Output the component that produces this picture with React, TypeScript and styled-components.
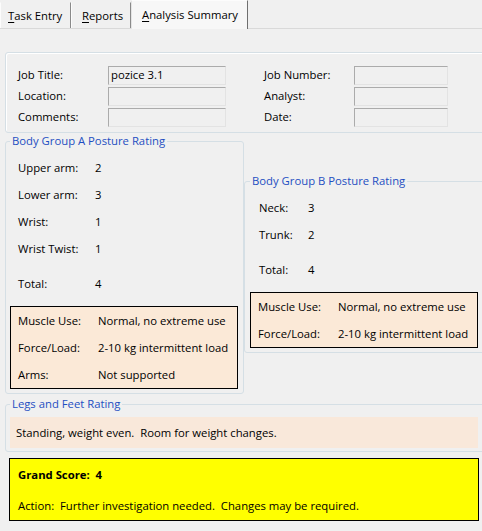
import styled, { createGlobalStyle } from "styled-components";

const GlobalStyle = createGlobalStyle`
    html, body {
        margin: 0;
        padding: 0;
        background: #f0f0f0;
    }
    body {
        font-family: "Open Sans", "Noto Sans", sans-serif;
        font-size: 11.3px;
        color: #000;
    }
`;

const Page = styled.div`
    width: 482px;
    height: 531px;
    overflow: hidden;
    background: #f0f0f0;
`;

const TabStrip = styled.div`
    display: flex;
    align-items: flex-end;
    height: 28px;
    border-bottom: 1px solid #d9d9d9;
`;

const Tab = styled.div<{ $active?: boolean; $width: number; $pad: number }>`
    box-sizing: border-box;
    width: ${p => p.$width}px;
    height: ${p => (p.$active ? 29 : 26)}px;
    margin-bottom: ${p => (p.$active ? -1 : 0)}px;
    padding-left: ${p => p.$pad}px;
    line-height: ${p => (p.$active ? 28 : 26)}px;
    background: ${p => (p.$active ? "#f7f7f7" : "#f0f0f0")};
    border-left: 1px solid ${p => (p.$active ? "#e4e4e4" : "#fcfcfc")};
    border-right: 1px solid ${p => (p.$active ? "#6f6f6f" : "#8a8a8a")};
    border-top: 1px solid ${p => (p.$active ? "#fcfcfc" : "transparent")};
    white-space: nowrap;
    u {
        text-decoration: underline;
        text-underline-offset: 2px;
    }
`;

const Content = styled.div`
    padding: 23px 0 0 5px;
    margin-right: -8px;
`;

const Frame = styled.div`
    border: 1px solid #d5dfe5;
    border-radius: 3px;
    box-shadow: inset 1px 1px 0 #fff;
    padding: 13px 0 3px 12px;
    display: flex;
    gap: 38px;
`;

const FieldColumn = styled.div`
    display: flex;
    flex-direction: column;
`;

const FieldRow = styled.div`
    display: flex;
    height: 21px;
`;

const FieldLabel = styled.span`
    width: 90px;
    line-height: 18px;
`;

const TextBox = styled.div<{ $width: number }>`
    box-sizing: border-box;
    width: ${p => p.$width}px;
    height: 19px;
    padding-left: 2px;
    line-height: 16px;
    border: 1px solid;
    border-color: #ababab #e3e3e3 #e3e3e3 #ababab;
    background: #f0f0f0;
`;

const GroupRow = styled.div`
    display: flex;
    align-items: flex-start;
`;

const Group = styled.fieldset<{ $width?: number; $top?: number; $padLeft?: number }>`
    box-sizing: border-box;
    margin: ${p => p.$top ?? 0}px 0 0 0;
    padding: 0 4px 4px ${p => p.$padLeft ?? 4}px;
    min-width: 0;
    ${p => (p.$width ? `width: ${p.$width}px;` : "flex: 1;")}
    border: 1px solid #d5dfe5;
    border-radius: 3px;
`;

const Legend = styled.legend`
    padding: 0 2px;
    line-height: 16px;
    color: #1e4fc2;
`;

const ScoreList = styled.div<{ $padLeft: number }>`
    padding: 5px 0 0 ${p => p.$padLeft}px;
`;

const ScoreRow = styled.div<{ $gap?: number }>`
    display: flex;
    height: 27px;
    line-height: 27px;
    margin-top: ${p => p.$gap ?? 0}px;
`;

const ScoreLabel = styled.span<{ $width: number }>`
    width: ${p => p.$width}px;
    flex-shrink: 0;
`;

const FactorBox = styled.div`
    box-sizing: border-box;
    width: 228px;
    margin-top: 9px;
    padding-left: 7px;
    border: 1px solid #000;
    background: #fbe9d7;
`;

const LegsGroup = styled(Group)`
    margin-top: 2px;
    padding: 0 4px 3px 4px;
`;

const LegsText = styled.div`
    margin-top: 5px;
    width: 468px;
    height: 31px;
    line-height: 31px;
    padding-left: 6px;
    box-sizing: border-box;
    background: #f9e8da;
    white-space: pre;
`;

const ScoreBox = styled.div`
    box-sizing: border-box;
    width: 470px;
    margin: 6px 0 0 4px;
    padding: 8px 0 6px 8px;
    border: 1px solid #000;
    background: #ffff00;
`;

const ScoreLine = styled.div<{ $bold?: boolean; $gap?: number }>`
    line-height: 16px;
    margin-top: ${p => p.$gap ?? 0}px;
    font-weight: ${p => (p.$bold ? 700 : 400)};
    white-space: pre;
`;

type Item = [string, string];

const groupA: Item[] = [
    ["Upper arm:", "2"],
    ["Lower arm:", "3"],
    ["Wrist:", "1"],
    ["Wrist Twist:", "1"],
];

const groupB: Item[] = [
    ["Neck:", "3"],
    ["Trunk:", "2"],
];

const factorsA: Item[] = [
    ["Muscle Use:", "Normal, no extreme use"],
    ["Force/Load:", "2-10 kg intermittent load"],
    ["Arms:", "Not supported"],
];

function Factors({ items }: { items: Item[] }) {
    return (
        <FactorBox>
            {items.map(([label, value]) => (
                <ScoreRow key={label}>
                    <ScoreLabel $width={80}>{label}</ScoreLabel>
                    <span>{value}</span>
                </ScoreRow>
            ))}
        </FactorBox>
    );
}

function Scores({ items, total, labelWidth, padLeft }: { items: Item[]; total: string; labelWidth: number; padLeft: number }) {
    return (
        <ScoreList $padLeft={padLeft}>
            {items.map(([label, value]) => (
                <ScoreRow key={label}>
                    <ScoreLabel $width={labelWidth}>{label}</ScoreLabel>
                    <span>{value}</span>
                </ScoreRow>
            ))}
            <ScoreRow $gap={8}>
                <ScoreLabel $width={labelWidth}>Total:</ScoreLabel>
                <span>{total}</span>
            </ScoreRow>
        </ScoreList>
    );
}

export default function App() {
    return (
        <Page>
            <GlobalStyle />
            <TabStrip>
                <Tab $width={71} $pad={7}><u>T</u>ask Entry</Tab>
                <Tab $width={60} $pad={10}><u>R</u>eports</Tab>
                <Tab $width={117} $pad={10} $active><u>A</u>nalysis Summary</Tab>
            </TabStrip>
            <Content>
                <Frame>
                    <FieldColumn>
                        <FieldRow>
                            <FieldLabel>Job Title:</FieldLabel>
                            <TextBox $width={118}>pozice 3.1</TextBox>
                        </FieldRow>
                        <FieldRow>
                            <FieldLabel>Location:</FieldLabel>
                            <TextBox $width={118} />
                        </FieldRow>
                        <FieldRow>
                            <FieldLabel>Comments:</FieldLabel>
                            <TextBox $width={118} />
                        </FieldRow>
                    </FieldColumn>
                    <FieldColumn>
                        <FieldRow>
                            <FieldLabel>Job Number:</FieldLabel>
                            <TextBox $width={94} />
                        </FieldRow>
                        <FieldRow>
                            <FieldLabel>Analyst:</FieldLabel>
                            <TextBox $width={94} />
                        </FieldRow>
                        <FieldRow>
                            <FieldLabel>Date:</FieldLabel>
                            <TextBox $width={94} />
                        </FieldRow>
                    </FieldColumn>
                </Frame>

                <GroupRow>
                    <Group $width={239}>
                        <Legend>Body Group A Posture Rating</Legend>
                        <Scores items={groupA} total="4" labelWidth={77} padLeft={8} />
                        <Factors items={factorsA} />
                    </Group>
                    <Group $top={40} $padLeft={5}>
                        <Legend>Body Group B Posture Rating</Legend>
                        <Scores items={groupB} total="4" labelWidth={49} padLeft={9} />
                        <Factors items={factorsA.slice(0, 2)} />
                    </Group>
                </GroupRow>

                <LegsGroup>
                    <Legend>Legs and Feet Rating</Legend>
                    <LegsText>Standing, weight even.  Room for weight changes.</LegsText>
                </LegsGroup>

                <ScoreBox>
                    <ScoreLine $bold>Grand Score:  4</ScoreLine>
                    <ScoreLine $gap={15}>Action:  Further investigation needed.  Changes may be required.</ScoreLine>
                </ScoreBox>
            </Content>
        </Page>
    );
}
